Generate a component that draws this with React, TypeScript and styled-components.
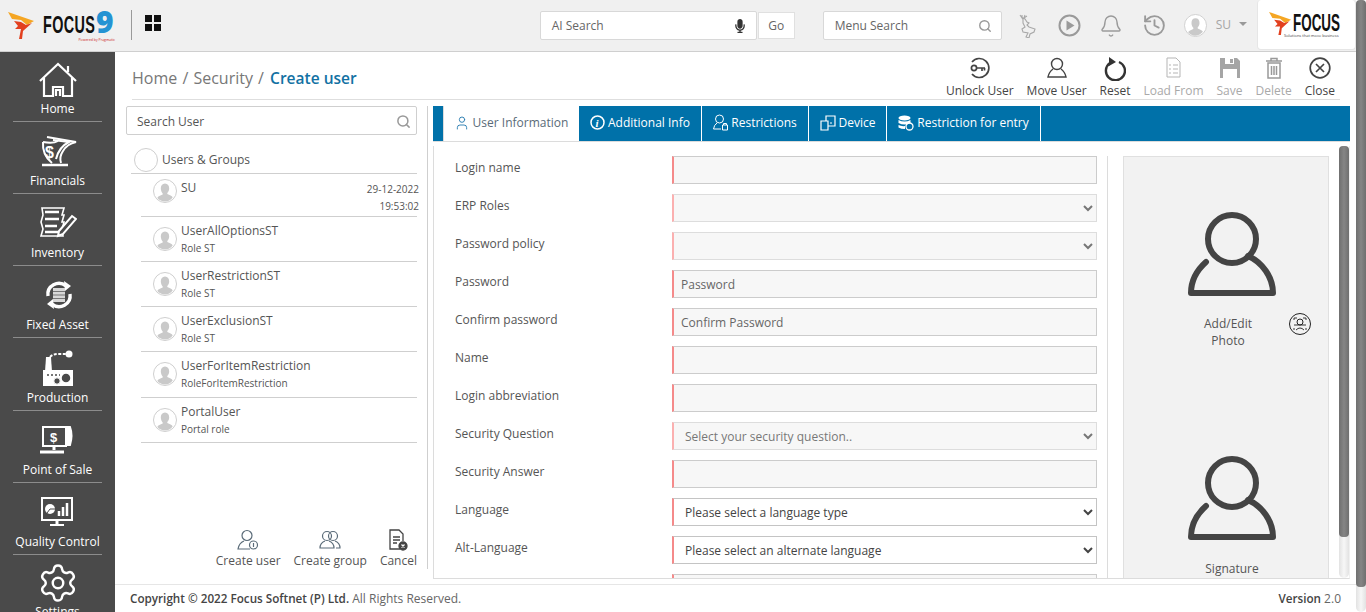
import React from "react";
import styled, { createGlobalStyle } from "styled-components";
import { Bell, History, Search, Settings, User } from "lucide-react";
import { FaMicrophone } from "react-icons/fa";

const GlobalStyle = createGlobalStyle`
    html, body, #root {
        margin: 0;
        padding: 0;
        height: 100%;
        overflow: hidden;
    }
    * {
        box-sizing: border-box;
    }
    body {
        font-family: "Open Sans", "Liberation Sans", sans-serif;
        color: #555;
        background: #fff;
    }
`;

const Page = styled.div`
    display: flex;
    width: 1366px;
    height: 612px;
    overflow: hidden;
`;

const Shell = styled.div`
    flex: 1;
    min-width: 0;
    display: flex;
    flex-direction: column;
`;

const Track = styled.div`
    flex: none;
    width: 10px;
    display: flex;
    flex-direction: column;
    border-radius: 5px;
    background: linear-gradient(90deg, #e2e2e2, #f7f7f7 50%, #e2e2e2);
`;

const Thumb = styled.div<{ $height: number }>`
    height: ${(p) => p.$height}px;
    border-radius: 4px;
    background: linear-gradient(90deg, #6f6f6f, #858585 50%, #6f6f6f);
`;

/* header */
const Header = styled.header`
    flex: none;
    height: 52px;
    display: flex;
    align-items: flex-start;
    background: #f0f0f0;
    border-bottom: 1px solid #cfcfcf;
`;

const Brand = styled.div`
    display: flex;
    align-items: center;
    width: 131px;
    height: 51px;
    padding-left: 8px;
`;

const BrandMark = styled.svg`
    flex: none;
    display: block;
`;

const BrandName = styled.div`
    position: relative;
    width: 72px;
    height: 30px;
    margin-left: 8px;
`;

const BrandWord = styled.span`
    position: absolute;
    left: 0;
    top: 2px;
    font-family: "Liberation Sans", sans-serif;
    font-weight: 700;
    font-size: 24px;
    line-height: 24px;
    color: #111;
    transform: scaleX(0.6);
    transform-origin: left center;
    letter-spacing: 0.6px;
`;

const BrandNine = styled.span`
    position: absolute;
    left: 53px;
    top: -1px;
    font-family: "Open Sans", sans-serif;
    font-weight: 800;
    font-size: 30px;
    line-height: 24px;
    color: #2493d3;
`;

const BrandTiny = styled.span`
    position: absolute;
    right: 0;
    top: 27px;
    font-size: 3.5px;
    line-height: 4px;
    white-space: nowrap;
    color: #c22;
`;

const HeadDivider = styled.div`
    flex: none;
    width: 1px;
    height: 30px;
    margin-top: 10px;
    background: #9a9a9a;
`;

const AppsGrid = styled.div`
    flex: none;
    display: grid;
    grid-template-columns: 7px 7px;
    grid-auto-rows: 7px;
    gap: 2px;
    margin: 15px 0 0 13px;
    & > i {
        display: block;
        background: #111;
    }
`;

const HeadSpacer = styled.div`
    flex: 1;
`;

const SearchBox = styled.div<{ $width: number }>`
    flex: none;
    display: flex;
    align-items: center;
    justify-content: space-between;
    width: ${(p) => p.$width}px;
    height: 29px;
    margin-top: 11px;
    padding: 0 9px 0 11px;
    background: #fff;
    border: 1px solid #d8d8d8;
    border-radius: 2px;
    font-size: 12px;
    color: #666;
`;

const GoButton = styled.div`
    flex: none;
    width: 37px;
    height: 27px;
    margin: 12px 28px 0 1px;
    display: flex;
    align-items: center;
    justify-content: center;
    background: #fff;
    border: 1px solid #e0e0e0;
    font-size: 12px;
    color: #666;
`;

const HeadIcons = styled.div`
    flex: none;
    display: flex;
    align-items: center;
    height: 51px;
    margin-left: 17px;
    color: #9a9a9a;
`;

const HeadIcon = styled.div<{ $gap: number }>`
    display: flex;
    margin-right: ${(p) => p.$gap}px;
`;

const HeadUser = styled.span`
    margin: -3px 8px 0 0;
    font-size: 12px;
    color: #a5a5a5;
`;

const Caret = styled.span`
    width: 0;
    height: 0;
    margin-top: -3px;
    border-left: 4px solid transparent;
    border-right: 4px solid transparent;
    border-top: 4px solid #999;
`;

const CompanyCard = styled.div`
    flex: none;
    width: 99px;
    height: 50px;
    margin-left: 10px;
    display: flex;
    align-items: flex-start;
    padding: 12px 0 0 11px;
    background: #fff;
    border: 1px solid #e6e6e6;
    border-top: 0;
    border-radius: 4px;
`;

const CompanyText = styled.div`
    position: relative;
    width: 50px;
    height: 30px;
    margin-left: 1px;
`;

const CompanyWord = styled.span`
    position: absolute;
    left: 0;
    top: 1px;
    font-family: "Liberation Sans", sans-serif;
    font-weight: 700;
    font-size: 24px;
    line-height: 20px;
    color: #111;
    transform: scaleX(0.56);
    transform-origin: left center;
`;

const CompanyTag = styled.span`
    position: absolute;
    left: -9px;
    top: 22px;
    font-size: 4px;
    line-height: 4px;
    white-space: nowrap;
    color: #444;
`;

/* sidebar */
const Body = styled.div`
    flex: 1;
    min-height: 0;
    display: flex;
`;

const Sidebar = styled.nav`
    flex: none;
    width: 115px;
    overflow: hidden;
    background: #4a4a4a;
`;

const NavItem = styled.div`
    flex: none;
    height: 72.17px;
    margin: 0 13px;
    display: flex;
    flex-direction: column;
    align-items: center;
    justify-content: flex-end;
    padding-bottom: 4px;
    border-bottom: 1px solid #8c8c8c;
    &:first-child {
        height: 70px;
    }
    &:last-child {
        height: 80px;
        border-bottom: 0;
        justify-content: flex-start;
        padding-top: 7px;
    }
`;

const NavIcon = styled.svg`
    flex: none;
    display: block;
`;

const NavLabel = styled.span`
    height: 16px;
    font-size: 12px;
    line-height: 16px;
    white-space: nowrap;
    color: #fff;
`;

/* main */
const Main = styled.main`
    flex: 1;
    min-width: 0;
    display: flex;
    flex-direction: column;
`;

const TitleBar = styled.div`
    flex: none;
    height: 48px;
    margin: 0 16px 0 17px;
    display: flex;
    align-items: flex-start;
    justify-content: space-between;
    border-bottom: 1px solid #dedede;
`;

const Crumbs = styled.div`
    margin-top: 14px;
    font-size: 16px;
    line-height: 24px;
    word-spacing: 1px;
    color: #777;
    white-space: pre;
`;

const CrumbCurrent = styled.span`
    margin-left: 1px;
    font-size: 15.5px;
    font-weight: 600;
    word-spacing: 0;
    color: #1271a3;
`;

const Actions = styled.div`
    display: flex;
    gap: 13px;
    padding-right: 5px;
`;

const ActionButton = styled.div<{ $off?: boolean }>`
    display: flex;
    flex-direction: column;
    align-items: center;
    font-size: 12px;
    line-height: 16px;
    white-space: nowrap;
    color: ${(p) => (p.$off ? "#a9a9a9" : "#444")};
`;

const ActionGlyph = styled.div`
    height: 31px;
    padding-top: 5px;
    display: flex;
    align-items: flex-start;
`;

const Work = styled.div`
    flex: 1;
    min-height: 0;
    display: flex;
    padding: 6px 6px 0 11px;
`;

/* user list */
const ListColumn = styled.section`
    flex: none;
    width: 302px;
    height: 463px;
    display: flex;
    flex-direction: column;
    padding-right: 10px;
    margin-right: 5px;
    border-right: 1px solid #cfcfcf;
`;

const UserSearch = styled.div`
    flex: none;
    height: 29px;
    display: flex;
    align-items: center;
    justify-content: space-between;
    padding: 1px 5px 0 10px;
    border: 1px solid #cfcfcf;
    border-radius: 2px;
    font-size: 12px;
    color: #555;
`;

const GroupRow = styled.div`
    flex: none;
    height: 39px;
    margin-left: 5px;
    padding: 13px 0 0 3px;
    display: flex;
    align-items: flex-start;
    gap: 4px;
    border-bottom: 1px solid #cfcfcf;
    font-size: 12px;
    line-height: 24px;
`;

const GroupRing = styled.span`
    width: 24px;
    height: 24px;
    border: 1px solid #cfcfcf;
    border-radius: 50%;
`;

const UserRows = styled.div`
    flex: 1;
    margin-left: 15px;
`;

const UserRow = styled.div<{ $first?: boolean }>`
    height: ${(p) => (p.$first ? 43 : 45)}px;
    display: flex;
    align-items: flex-start;
    padding: ${(p) => (p.$first ? "5px" : "10px")} 0 0 12px;
    border-bottom: 1px solid #cfcfcf;
    &:nth-child(5) {
        height: 46px;
    }
`;

const Avatar = styled.svg`
    flex: none;
    display: block;
`;

const UserText = styled.div<{ $first?: boolean }>`
    flex: 1;
    margin: ${(p) => (p.$first ? "0" : "-5px")} 0 0 4px;
    white-space: nowrap;
`;

const UserName = styled.div`
    font-size: 12px;
    line-height: 18px;
`;

const UserRole = styled.div`
    font-size: 10px;
    line-height: 17px;
    color: #555;
`;

const UserStamp = styled.div`
    margin: 0 -2px 0 0;
    padding-top: 2px;
    text-align: right;
    font-size: 10px;
    line-height: 17px;
    color: #555;
`;

const ListActions = styled.div`
    flex: none;
    display: flex;
    justify-content: flex-end;
    gap: 13px;
`;

const ListAction = styled.div`
    display: flex;
    flex-direction: column;
    align-items: center;
    gap: 1px;
    font-size: 12px;
    line-height: 17px;
    white-space: nowrap;
`;

/* tabs and form */
const Detail = styled.section`
    flex: 1;
    min-width: 0;
    display: flex;
    flex-direction: column;
`;

const Tabs = styled.div`
    flex: none;
    height: 36px;
    display: flex;
    padding-left: 10px;
    background: #0071a9;
    border-bottom: 1px solid #dcdcdc;
`;

const Tab = styled.div<{ $active?: boolean; $width: number }>`
    flex: none;
    width: ${(p) => p.$width}px;
    display: flex;
    align-items: center;
    justify-content: center;
    gap: 3px;
    padding-bottom: 2px;
    font-size: 12px;
    white-space: nowrap;
    color: ${(p) => (p.$active ? "#5a6b78" : "#fff")};
    background: ${(p) => (p.$active ? "#fff" : "transparent")};
    border-left: ${(p) => (p.$active ? "1px solid #dcdcdc" : "0")};
    border-right: 1px solid #fff;
`;

const Panel = styled.div`
    flex: none;
    height: 433px;
    margin-top: 4px;
    display: flex;
    overflow: hidden;
    border-left: 1px solid #dcdcdc;
    border-bottom: 1px solid #dcdcdc;
    border-right: 1px solid #f0f0f0;
`;

const FormColumn = styled.div`
    flex: none;
    width: 674px;
    margin-top: 10px;
    padding: 0 10px 0 21px;
    border-right: 1px solid #dcdcdc;
`;

const FormRow = styled.div`
    display: flex;
    align-items: flex-start;
    height: 28px;
    margin-bottom: 10px;
`;

const FieldLabel = styled.label`
    flex: none;
    width: 217px;
    font-size: 12px;
    line-height: 24px;
    color: #555;
`;

const TextField = styled.input`
    flex: none;
    width: 425px;
    height: 28px;
    padding: 0 7px;
    background: #f7f7f7;
    border: 1px solid #cccccc;
    border-left: 2px solid #f58a8a;
    border-radius: 0;
    outline: none;
    font-family: inherit;
    font-size: 12px;
    color: #555;
    &::placeholder {
        color: #666;
        opacity: 1;
    }
`;

const SelectField = styled.select<{ $active?: boolean }>`
    flex: none;
    width: 425px;
    height: 28px;
    padding: 0 4px 0 7px;
    background-color: ${(p) => (p.$active ? "#fff" : "#f7f7f7")};
    border: 1px solid ${(p) => (p.$active ? "#c4c4c4" : "#dddddd")};
    border-left: 2px solid ${(p) => (p.$active ? "#f58a8a" : "#fbb0b0")};
    border-radius: 0;
    outline: none;
    font-family: inherit;
    font-size: 12px;
    color: ${(p) => (p.$active ? "#444" : "#777")};
`;

const PhotoPane = styled.div`
    flex: none;
    width: 206px;
    margin: 10px 10px 0 15px;
    background: #f2f2f2;
    border: 1px solid #e0e0e0;
    border-bottom: 0;
`;

const PhotoCell = styled.div<{ $height: number }>`
    position: relative;
    height: ${(p) => p.$height}px;
    padding: 55px 0 0 12px;
    display: flex;
    flex-direction: column;
    align-items: center;
`;

const PhotoCaption = styled.div<{ $nudge: number; $top: number }>`
    margin: ${(p) => p.$top}px 0 0 ${(p) => p.$nudge}px;
    width: 80px;
    text-align: center;
    font-size: 12px;
    line-height: 17px;
    color: #555;
`;

const FaceButton = styled.svg`
    position: absolute;
    left: 165px;
    top: 156px;
    display: block;
`;

const PanelBar = styled(Track)`
    margin-right: 1px;
`;

/* footer */
const Footer = styled.footer`
    flex: none;
    height: 28px;
    margin-top: auto;
    display: flex;
    align-items: center;
    justify-content: space-between;
    padding: 0 15px;
    border-top: 1px solid #e6e6e6;
    font-size: 12px;
    color: #666;
`;

const Strong = styled.span`
    font-size: 11.7px;
    font-weight: 600;
    color: #444;
`;

const FlameMark = ({ w }: { w: number }) => (
    <BrandMark width={w} height={w} viewBox="0 0 27 27">
        <path d="M0 0 L26 9 L19 13 L13 8 L4 7 Z" fill="#f5a623" />
        <path d="M6 9 L13 10 L18 13 L24 11 L15 19 L14 27 L11 27 L13 17 L7 17 L10 14 Z" fill="#e2401f" />
    </BrandMark>
);

const PersonAvatar = ({ size = 24 }: { size?: number }) => (
    <Avatar width={size} height={size} viewBox="0 0 24 24">
        <circle cx="12" cy="12" r="11.5" fill="#fff" stroke="#cfcfcf" />
        <path
            d="M12 4.5c2.8 0 4.2 2.2 4.2 4.8 0 2-.8 3.6-1.9 4.6v1.2c2.3 1 4.7 1.7 5.4 3.4A11 11 0 0 1 12 22.6a11 11 0 0 1-7.7-3.6c.7-1.7 3.1-2.4 5.4-3.4v-1.2C8.600 13.400 7.800 11.300 7.800 9.300c0-2.600 1.400-4.800 4.200-4.800Z"
            fill="#c9c9c9"
        />
    </Avatar>
);

const BigPerson = () => (
    <svg width="88" height="84" viewBox="0 0 88 84" fill="none" stroke="#444" strokeWidth="6" strokeLinecap="round" style={{ display: "block" }}>
        <circle cx="44" cy="27" r="24" />
        <path d="M60 44 C74 50 85 65 85 81 H3 C3 68 9 58 18 50" strokeLinejoin="round" />
    </svg>
);

const nav = [
    {
        label: "Home",
        icon: (
            <g fill="none" stroke="#fff" strokeWidth="2.200">
                <path d="M1 20 L19 3 L37 20" />
                <path d="M29 11 V5" />
                <path d="M5 17 V35 H14 V26 H24 V35 H33 V17" />
                <path d="M17 35 V29 H21 V35" />
            </g>
        ),
    },
    {
        label: "Financials",
        icon: (
            <g fill="none" stroke="#fff" strokeWidth="2">
                <path d="M4 9 Q3 22 13 30" />
                <path d="M4 9 Q14 11 19 8" />
                <path d="M8 4 L37 9 Q28 11 24 18 Q20 24 22 30" />
                <path d="M14 7 L30 9 Q20 14 17 26" />
                <path d="M3 32 H29" strokeWidth="2.500" />
                <text x="6" y="25" fontFamily="Liberation Sans" fontWeight="700" fontSize="16" fill="#fff" stroke="none">$</text>
            </g>
        ),
    },
    {
        label: "Inventory",
        icon: (
            <g fill="none" stroke="#fff" strokeWidth="1.600">
                <path d="M3 3 H25 L23 10 H25 L23 17 H25 L23 24 L24 31 H2 L4 24 L2 17 L4 10 Z" />
                <path d="M6 7 H20 M6 14 H20 M6 21 H18 M6 27 H19" strokeWidth="2.400" />
                <path d="M20 26 L33 11 L37 14 L24 29 L19 31 Z" fill="#4a4a4a" strokeWidth="2" />
            </g>
        ),
    },
    {
        label: "Fixed Asset",
        icon: (
            <g fill="none" stroke="#fff">
                <path d="M9 19 A11 11 0 0 1 27 9" strokeWidth="3.400" />
                <path d="M25 4 L32 9 L26 14 Z" fill="#fff" stroke="none" />
                <path d="M31 17 A11 11 0 0 1 13 27" strokeWidth="3.400" />
                <path d="M15 32 L8 27 L14 22 Z" fill="#fff" stroke="none" />
                <path d="M14 11 H26 V25 H14 Z" fill="#d8d8d8" stroke="none" />
                <path d="M14 14.500 H26 M14 18 H26 M14 21.500 H26" stroke="#777" />
            </g>
        ),
    },
    {
        label: "Production",
        icon: (
            <g>
                <path d="M7 7 H12 L13 22 H6 Z" fill="#fff" />
                <path d="M11 7 Q14 4 19 4 H28" stroke="#fff" strokeWidth="2" strokeDasharray="3 1.500" fill="none" />
                <circle cx="30" cy="4" r="3.500" fill="#fff" />
                <path d="M4 20 H34 V36 H4 Z" fill="#fff" />
                <circle cx="27" cy="28" r="5" fill="#4a4a4a" stroke="#fff" strokeWidth="1.500" />
                <circle cx="18" cy="31" r="3.200" fill="#4a4a4a" stroke="#fff" strokeWidth="1" />
                <path d="M8 25 H21" stroke="#4a4a4a" strokeWidth="1.500" strokeDasharray="2 2" />
            </g>
        ),
    },
    {
        label: "Point of Sale",
        icon: (
            <g fill="none" stroke="#fff">
                <path d="M4 5 H27 V24 H4 Z" strokeWidth="2" />
                <path d="M27 5 H31 Q34 13 31 23 H27" strokeWidth="2" fill="#fff" />
                <path d="M15 24 V28" strokeWidth="3" />
                <path d="M1 30 H25" strokeWidth="3" />
                <text x="11" y="20" fontFamily="Liberation Sans" fontWeight="700" fontSize="13" fill="#fff" stroke="none">$</text>
            </g>
        ),
    },
    {
        label: "Quality Control",
        icon: (
            <g fill="none" stroke="#fff">
                <path d="M3 4 H33 V26 H3 Z" strokeWidth="2" />
                <circle cx="11" cy="15" r="5" fill="#fff" stroke="none" />
                <path d="M11 15 L16 15 M11 15 L8 19" stroke="#4a4a4a" />
                <path d="M20 22 V17 M24 22 V13 M28 22 V9" strokeWidth="2.500" />
                <path d="M18 26 V30" strokeWidth="3" />
                <path d="M11 31 H25" strokeWidth="2" />
            </g>
        ),
    },
];

const ringStyle = { fill: "none", stroke: "#444", strokeWidth: 1.7 };

const actions = [
    {
        label: "Unlock User",
        icon: (
            <svg width="24" height="22" viewBox="0 0 24 22">
                <path d="M4 5 A9.500 9.500 0 1 1 4 17" {...ringStyle} />
                <circle cx="6" cy="11" r="2.600" {...ringStyle} />
                <path d="M9 11 H17 M14 11 V14 M16.500 11 V13.500" {...ringStyle} />
            </svg>
        ),
    },
    {
        label: "Move User",
        icon: (
            <svg width="22" height="22" viewBox="0 0 22 22">
                <circle cx="11" cy="7" r="5.500" {...ringStyle} strokeWidth={1.4} />
                <path d="M7 12 Q3 15 2 20 H20 Q19 15 15 12" {...ringStyle} strokeWidth={1.4} />
            </svg>
        ),
    },
    {
        label: "Reset",
        icon: (
            <svg width="22" height="24" viewBox="0 0 22 24">
                <path d="M6 6 A9.500 9.500 0 1 0 15 5" fill="none" stroke="#333" strokeWidth="2.400" />
                <path d="M5 0 L12 5 L5 9 Z" fill="#333" />
            </svg>
        ),
    },
    {
        label: "Load From",
        off: true,
        icon: (
            <svg width="15" height="22" viewBox="0 0 15 22" fill="none" stroke="#b5b5b5">
                <path d="M1 1 H10 L14 5 V20 H1 Z" />
                <path d="M3 8 H5 M3 12 H5 M3 16 H5 M7 8 H12 M7 12 H12 M7 16 H12" />
            </svg>
        ),
    },
    {
        label: "Save",
        off: true,
        icon: (
            <svg width="22" height="22" viewBox="0 0 22 22">
                <path d="M1 1 H18 L21 4 V21 H1 Z" fill="#a5a5a5" />
                <path d="M4 12 H18 V21 H4 Z" fill="#fff" />
                <path d="M6 1 H15 V7 H6 Z" fill="#fff" />
                <path d="M11 2 H14 V6 H11 Z" fill="#a5a5a5" />
            </svg>
        ),
    },
    {
        label: "Delete",
        off: true,
        icon: (
            <svg width="18" height="22" viewBox="0 0 18 22" fill="none" stroke="#999" strokeWidth="1.500">
                <path d="M1 4 H17 M6 4 V1.500 H12 V4" />
                <path d="M3 6 H15 V21 H3 Z" />
                <path d="M6.500 9 V18 M9 9 V18 M11.500 9 V18" />
            </svg>
        ),
    },
    {
        label: "Close",
        icon: (
            <svg width="22" height="22" viewBox="0 0 22 22">
                <circle cx="11" cy="11" r="9.800" {...ringStyle} />
                <path d="M7 7 L15 15 M15 7 L7 15" {...ringStyle} />
            </svg>
        ),
    },
];

const users = [
    { name: "UserAllOptionsST", role: "Role ST" },
    { name: "UserRestrictionST", role: "Role ST" },
    { name: "UserExclusionST", role: "Role ST" },
    { name: "UserForItemRestriction", role: "RoleForItemRestriction" },
    { name: "PortalUser", role: "Portal role" },
];

const plainRows = [
    { label: "Login name", kind: "text" },
    { label: "ERP Roles", kind: "pale" },
    { label: "Password policy", kind: "pale" },
    { label: "Password", kind: "text", hint: "Password" },
    { label: "Confirm password", kind: "text", hint: "Confirm Password" },
    { label: "Name", kind: "text" },
    { label: "Login abbreviation", kind: "text" },
    { label: "Security Question", kind: "pale", value: "Select your security question.." },
    { label: "Security Answer", kind: "text" },
    { label: "Language", kind: "active", value: "Please select a language type" },
    { label: "Alt-Language", kind: "active", value: "Please select an alternate language" },
    { label: "", kind: "text" },
];

const App = () => {
    return (
        <Page>
            <GlobalStyle />
            <Shell>
                <Header>
                    <Brand>
                        <FlameMark w={27} />
                        <BrandName>
                            <BrandWord>FOCUS</BrandWord>
                            <BrandNine>9</BrandNine>
                            <BrandTiny>Powered by Pragmatic</BrandTiny>
                        </BrandName>
                    </Brand>
                    <HeadDivider />
                    <AppsGrid>
                        <i />
                        <i />
                        <i />
                        <i />
                    </AppsGrid>
                    <HeadSpacer />
                    <SearchBox $width={217}>
                        AI Search
                        <FaMicrophone size={14} color="#333" />
                    </SearchBox>
                    <GoButton>Go</GoButton>
                    <SearchBox $width={179}>
                        Menu Search
                        <Search size={14} color="#999" strokeWidth={2.4} />
                    </SearchBox>
                    <HeadIcons>
                        <HeadIcon $gap={22}>
                            <svg width="17" height="24" viewBox="0 0 17 24" fill="none" stroke="#a8a8a8" strokeWidth="1.100">
                                <path d="M1 1 L3 4 L3 1 M6 1 L5 4 L8 2 M4 4 L6 5 L8 8 L10 9 L8 11 L10 13 L16 15 L15 18 L11 20 L10 24 L7 23 L9 19 L4 18 L3 15 L6 13 L4 9 Z" />
                            </svg>
                        </HeadIcon>
                        <HeadIcon $gap={18}>
                            <svg width="23" height="23" viewBox="0 0 23 23">
                                <circle cx="11.500" cy="11.500" r="10" fill="none" stroke="#9a9a9a" strokeWidth="2" />
                                <path d="M8.500 6.500 L16.500 11.500 L8.500 16.500 Z" fill="#9a9a9a" />
                            </svg>
                        </HeadIcon>
                        <HeadIcon $gap={19}>
                            <Bell size={24} strokeWidth={1.4} />
                        </HeadIcon>
                        <HeadIcon $gap={17}>
                            <History size={25} strokeWidth={1.8} />
                        </HeadIcon>
                        <HeadIcon $gap={9}>
                            <PersonAvatar size={23} />
                        </HeadIcon>
                        <HeadUser>SU</HeadUser>
                        <Caret />
                    </HeadIcons>
                    <CompanyCard>
                        <FlameMark w={23} />
                        <CompanyText>
                            <CompanyWord>FOCUS</CompanyWord>
                            <CompanyTag>Solutions that move business</CompanyTag>
                        </CompanyText>
                    </CompanyCard>
                </Header>
                <Body>
                    <Sidebar>
                        {nav.map((item) => (
                            <NavItem key={item.label}>
                                <NavIcon width="38" height="40" viewBox="0 0 38 40">
                                    {item.icon}
                                </NavIcon>
                                <NavLabel>{item.label}</NavLabel>
                            </NavItem>
                        ))}
                        <NavItem>
                            <Settings size={42} color="#fff" strokeWidth={1.4} />
                            <NavLabel>Settings</NavLabel>
                        </NavItem>
                    </Sidebar>
                    <Main>
                        <TitleBar>
                            <Crumbs>
                                Home / Security / <CrumbCurrent>Create user</CrumbCurrent>
                            </Crumbs>
                            <Actions>
                                {actions.map((a) => (
                                    <ActionButton key={a.label} $off={a.off}>
                                        <ActionGlyph>{a.icon}</ActionGlyph>
                                        {a.label}
                                    </ActionButton>
                                ))}
                            </Actions>
                        </TitleBar>
                        <Work>
                            <ListColumn>
                                <UserSearch>
                                    Search User
                                    <Search size={15} color="#999" strokeWidth={2.4} />
                                </UserSearch>
                                <GroupRow>
                                    <GroupRing />
                                    Users &amp; Groups
                                </GroupRow>
                                <UserRows>
                                    <UserRow $first>
                                        <PersonAvatar />
                                        <UserText $first>
                                            <UserName>SU</UserName>
                                        </UserText>
                                        <UserStamp>
                                            29-12-2022
                                            <br />
                                            19:53:02
                                        </UserStamp>
                                    </UserRow>
                                    {users.map((u) => (
                                        <UserRow key={u.name}>
                                            <PersonAvatar />
                                            <UserText>
                                                <UserName>{u.name}</UserName>
                                                <UserRole>{u.role}</UserRole>
                                            </UserText>
                                        </UserRow>
                                    ))}
                                </UserRows>
                                <ListActions>
                                    <ListAction>
                                        <svg width="22" height="22" viewBox="0 0 22 22" fill="none" stroke="#5a6b78" strokeWidth="1.200">
                                            <circle cx="10" cy="6.500" r="5" />
                                            <path d="M7 12 Q2 14 1 20 H13" />
                                            <circle cx="16.500" cy="16" r="4" />
                                            <path d="M16.500 14 V18" />
                                        </svg>
                                        Create user
                                    </ListAction>
                                    <ListAction>
                                        <svg width="22" height="22" viewBox="0 0 22 22" fill="none" stroke="#5a6b78" strokeWidth="1.200">
                                            <circle cx="8" cy="7" r="4.500" />
                                            <circle cx="14" cy="7" r="4.500" />
                                            <path d="M6 12 Q1 14 1 19 H15 Q15 14 10 12" />
                                            <path d="M16 12 Q21 14 21 19 H17" />
                                        </svg>
                                        Create group
                                    </ListAction>
                                    <ListAction>
                                        <svg width="20" height="22" viewBox="0 0 20 22" fill="none" stroke="#444" strokeWidth="1.300">
                                            <path d="M12 20 H2 V1 H11 L15 5 V12" />
                                            <path d="M5 8 H12 M5 11 H12 M5 14 H9" />
                                            <circle cx="15" cy="17" r="4" fill="#444" />
                                            <path d="M13.500 15.500 L16.500 18.500 M16.500 15.500 L13.500 18.500" stroke="#fff" />
                                        </svg>
                                        Cancel
                                    </ListAction>
                                </ListActions>
                            </ListColumn>
                            <Detail>
                                <Tabs>
                                    <Tab $active $width={136}>
                                        <User size={16} strokeWidth={1.400} color="#2a7db0" />
                                        User Information
                                    </Tab>
                                    <Tab $width={123}>
                                        <svg width="15" height="15" viewBox="0 0 15 15">
                                            <circle cx="7.500" cy="7.500" r="6.500" fill="none" stroke="#fff" strokeWidth="1.500" />
                                            <text x="5.500" y="12" fontFamily="Liberation Serif" fontStyle="italic" fontWeight="700" fontSize="11" fill="#fff">i</text>
                                        </svg>
                                        Additional Info
                                    </Tab>
                                    <Tab $width={107}>
                                        <svg width="15" height="17" viewBox="0 0 15 17" fill="none" stroke="#fff">
                                            <circle cx="6.500" cy="5" r="4" />
                                            <path d="M4 9 Q1 11 0.500 15 H8" />
                                            <path d="M9.500 11 H14.500 V16 H9.500 Z M10.500 11 V9.500 H13.500 V11" />
                                        </svg>
                                        Restrictions
                                    </Tab>
                                    <Tab $width={78}>
                                        <svg width="16" height="16" viewBox="0 0 16 16" fill="none" stroke="#fff" strokeWidth="1.200">
                                            <path d="M1 6 H8 V15 H1 Z" />
                                            <path d="M6 6 V1 H15 V11 H8" />
                                            <path d="M10 8 H12" />
                                        </svg>
                                        Device
                                    </Tab>
                                    <Tab $width={154}>
                                        <svg width="16" height="16" viewBox="0 0 16 16">
                                            <ellipse cx="6.500" cy="3" rx="6" ry="2.500" fill="#fff" />
                                            <path d="M0.500 5 Q6.500 8 12.500 5 V8 Q6.500 11 0.500 8 Z M0.500 10 Q3.500 11.500 7 11 V14 Q3 14 0.500 12.500 Z" fill="#fff" />
                                            <circle cx="11.500" cy="11.500" r="3.500" fill="none" stroke="#fff" strokeWidth="1.300" />
                                        </svg>
                                        Restriction for entry
                                    </Tab>
                                </Tabs>
                                <Panel>
                                    <FormColumn>
                                        {plainRows.map((row, i) => (
                                            <FormRow key={i}>
                                                <FieldLabel>{row.label}</FieldLabel>
                                                {row.kind === "text" ? (
                                                    <TextField readOnly placeholder={row.hint} />
                                                ) : (
                                                    <SelectField $active={row.kind === "active"} defaultValue={row.value ?? ""}>
                                                        <option value={row.value ?? ""}>{row.value ?? ""}</option>
                                                    </SelectField>
                                                )}
                                            </FormRow>
                                        ))}
                                    </FormColumn>
                                    <PhotoPane>
                                        <PhotoCell $height={244}>
                                            <BigPerson />
                                            <PhotoCaption $nudge={-8} $top={19}>
                                                Add/Edit Photo
                                            </PhotoCaption>
                                            <FaceButton width="22" height="22" viewBox="0 0 22 22" fill="none" stroke="#222">
                                                <circle cx="11" cy="11" r="10.500" />
                                                <circle cx="11" cy="9" r="3" />
                                                <path d="M5 12 H17 M7 17 Q11 13 15 17 M5 7 V5 H8 M14 5 H17 V7 M5 15 V17 M17 15 V17" strokeWidth="0.900" />
                                            </FaceButton>
                                        </PhotoCell>
                                        <PhotoCell $height={178}>
                                            <BigPerson />
                                            <PhotoCaption $nudge={0} $top={20}>
                                                Signature
                                            </PhotoCaption>
                                        </PhotoCell>
                                    </PhotoPane>
                                    <PanelBar>
                                        <Thumb $height={391} />
                                    </PanelBar>
                                </Panel>
                            </Detail>
                        </Work>
                        <Footer>
                            <span>
                                <Strong>Copyright © 2022 Focus Softnet (P) Ltd.</Strong> All Rights Reserved.
                            </span>
                            <span>
                                <Strong>Version</Strong> 2.0
                            </span>
                        </Footer>
                    </Main>
                </Body>
            </Shell>
            <Track>
                <Thumb $height={587} />
            </Track>
        </Page>
    );
};

export default App;
